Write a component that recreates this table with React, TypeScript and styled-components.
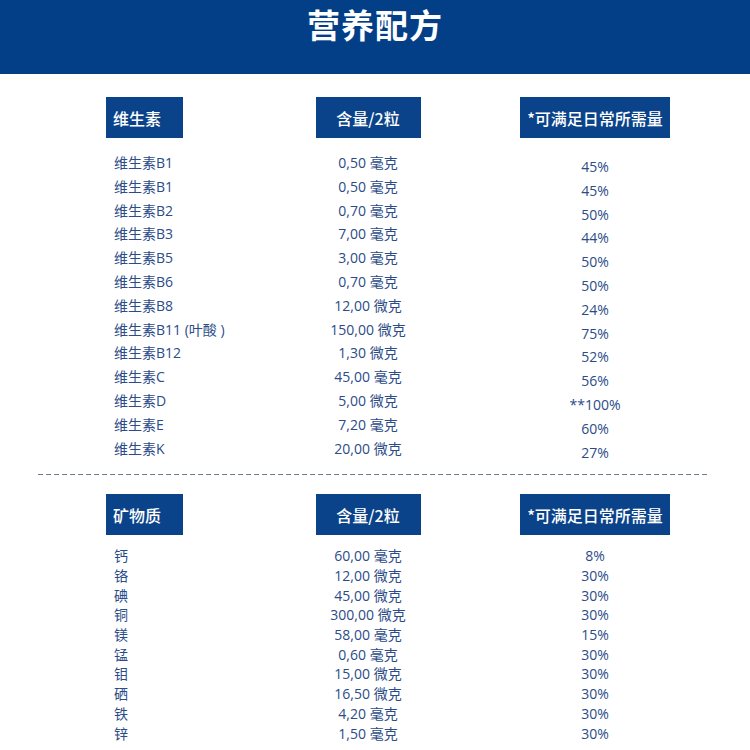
import React from "react";
import styled, { createGlobalStyle } from "styled-components";

const GlobalStyle = createGlobalStyle`
  html, body { margin: 0; padding: 0; background: #ffffff; }
  body { font-family: "Open Sans", "Noto Sans CJK SC", sans-serif; }
`;

const Page = styled.div`
  width: 750px;
  background: #ffffff;
`;

const Banner = styled.header`
  height: 74px;
  background: #023f86;
  display: flex;
  justify-content: center;
  align-items: flex-start;
`;

const Title = styled.h1`
  margin: 0;
  padding: 0;
  font-family: "Noto Sans CJK SC", sans-serif;
  font-weight: 700;
  font-size: 33px;
  line-height: 48px;
  letter-spacing: 1px;
  color: #ffffff;
`;

const Section = styled.section<{ $top: number }>`
  padding-top: ${(p) => p.$top}px;
`;

const Grid = styled.div`
  display: grid;
  grid-template-columns: 160px 204px 250px;
  padding-left: 106px;
`;

const HeadCell = styled.div<{ $align: "start" | "center" }>`
  display: flex;
  justify-content: ${(p) => (p.$align === "start" ? "flex-start" : "center")};
`;

const HeadBox = styled.div<{ $w: number; $left?: boolean }>`
  width: ${(p) => p.$w}px;
  height: 41px;
  background: #0b438a;
  color: #ffffff;
  font-family: "Noto Sans CJK SC", sans-serif;
  font-weight: 500;
  font-size: 16px;
  display: flex;
  align-items: center;
  justify-content: ${(p) => (p.$left ? "flex-start" : "center")};
  padding-left: ${(p) => (p.$left ? "7px" : "0")};
  box-sizing: border-box;
  white-space: nowrap;
`;

const Rows = styled.div<{ $gap: number }>`
  margin-top: ${(p) => p.$gap}px;
`;

const Cell = styled.div<{ $h: number; $align: "left" | "center"; $shift?: number }>`
  height: ${(p) => p.$h}px;
  line-height: ${(p) => p.$h}px;
  font-size: 14px;
  color: #2c4c88;
  white-space: nowrap;
  text-align: ${(p) => p.$align};
  padding-left: ${(p) => (p.$align === "left" ? "8px" : "0")};
  transform: translateY(${(p) => p.$shift ?? 0}px);
`;

const Dashed = styled.div`
  margin: 14px 0 0 38px;
  width: 670px;
  height: 1px;
  background: repeating-linear-gradient(
    to right,
    #6f7d92 0 5px,
    transparent 5px 8px
  );
`;

type Row = [string, string, string];

const vitamins: Row[] = [
  ["维生素B1", "0,50 毫克", "45%"],
  ["维生素B1", "0,50 毫克", "45%"],
  ["维生素B2", "0,70 毫克", "50%"],
  ["维生素B3", "7,00 毫克", "44%"],
  ["维生素B5", "3,00 毫克", "50%"],
  ["维生素B6", "0,70 毫克", "50%"],
  ["维生素B8", "12,00 微克", "24%"],
  ["维生素B11 (叶酸 )", "150,00 微克", "75%"],
  ["维生素B12", "1,30 微克", "52%"],
  ["维生素C", "45,00 毫克", "56%"],
  ["维生素D", "5,00 微克", "**100%"],
  ["维生素E", "7,20 毫克", "60%"],
  ["维生素K", "20,00 微克", "27%"],
];

const minerals: Row[] = [
  ["钙", "60,00 毫克", "8%"],
  ["铬", "12,00 微克", "30%"],
  ["碘", "45,00 微克", "30%"],
  ["铜", "300,00 微克", "30%"],
  ["镁", "58,00 毫克", "15%"],
  ["锰", "0,60 毫克", "30%"],
  ["钼", "15,00 微克", "30%"],
  ["硒", "16,50 微克", "30%"],
  ["铁", "4,20 毫克", "30%"],
  ["锌", "1,50 毫克", "30%"],
];

function Table({
  title,
  rows,
  rowH,
  gap,
  shift,
}: {
  title: string;
  rows: Row[];
  rowH: number;
  gap: number;
  shift: number;
}) {
  return (
    <>
      <Grid>
        <HeadCell $align="start">
          <HeadBox $w={77} $left>
            {title}
          </HeadBox>
        </HeadCell>
        <HeadCell $align="center">
          <HeadBox $w={105}>含量/2粒</HeadBox>
        </HeadCell>
        <HeadCell $align="center">
          <HeadBox $w={150}>*可满足日常所需量</HeadBox>
        </HeadCell>
      </Grid>
      <Rows $gap={gap}>
        <Grid>
          {rows.map(([name, amount, pct], i) => (
            <React.Fragment key={i}>
              <Cell $h={rowH} $align="left">
                {name}
              </Cell>
              <Cell $h={rowH} $align="center">
                {amount}
              </Cell>
              <Cell $h={rowH} $align="center" $shift={shift}>
                {pct}
              </Cell>
            </React.Fragment>
          ))}
        </Grid>
      </Rows>
    </>
  );
}

export default function App() {
  return (
    <Page>
      <GlobalStyle />
      <Banner>
        <Title>营养配方</Title>
      </Banner>
      <Section $top={23}>
        <Table title="维生素" rows={vitamins} rowH={23.8} gap={13} shift={4} />
      </Section>
      <Dashed />
      <Section $top={19}>
        <Table title="矿物质" rows={minerals} rowH={19.7} gap={11} shift={0} />
      </Section>
    </Page>
  );
}
